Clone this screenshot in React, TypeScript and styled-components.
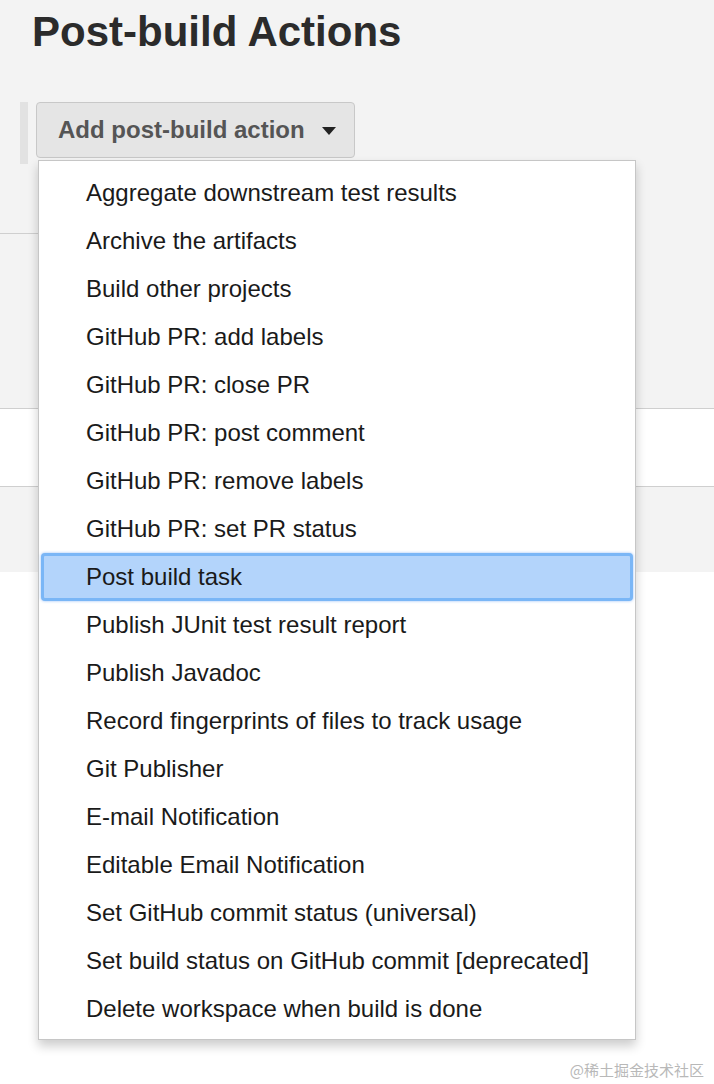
import styled, { createGlobalStyle } from 'styled-components'

const GlobalStyle = createGlobalStyle`
  html, body {
    margin: 0;
    padding: 0;
    background: #ffffff;
  }
  body {
    font-family: 'Liberation Sans', Arial, Helvetica, sans-serif;
    color: #222;
  }
`

const actions = [
  'Aggregate downstream test results',
  'Archive the artifacts',
  'Build other projects',
  'GitHub PR: add labels',
  'GitHub PR: close PR',
  'GitHub PR: post comment',
  'GitHub PR: remove labels',
  'GitHub PR: set PR status',
  'Post build task',
  'Publish JUnit test result report',
  'Publish Javadoc',
  'Record fingerprints of files to track usage',
  'Git Publisher',
  'E-mail Notification',
  'Editable Email Notification',
  'Set GitHub commit status (universal)',
  'Set build status on GitHub commit [deprecated]',
  'Delete workspace when build is done',
]

const selected = 'Post build task'

export default function App() {
  return (
    <Page>
      <GlobalStyle />
      <Header>
        <Title>Post-build Actions</Title>
        <ButtonRow>
          <SideBar />
          <DropWrap>
            <AddButton>
              Add post-build action
              <Caret viewBox="0 0 14 8">
                <path d="M0 0 L14 0 L7 8 Z" fill="#222" />
              </Caret>
            </AddButton>
            <Menu>
              {actions.map((a) => (
                <MenuItem key={a} $active={a === selected}>
                  {a}
                </MenuItem>
              ))}
            </Menu>
          </DropWrap>
        </ButtonRow>
        <StubLine />
      </Header>
      <Band $height={174} $gray />
      <Band $height={77} />
      <Band $height={85} $gray $last />
      <Watermark>@稀土掘金技术社区</Watermark>
    </Page>
  )
}

const Page = styled.div`
  position: relative;
  height: 1084px;
  overflow: hidden;
  background: #ffffff;
`

const Header = styled.section`
  background: #f3f3f3;
  height: 234px;
  display: flex;
  flex-direction: column;
  position: relative;
`

const Title = styled.h1`
  margin: 0;
  padding: 8px 0 0 32px;
  font-size: 42px;
  line-height: 48px;
  font-weight: 700;
  color: #2b2b2b;
`

const ButtonRow = styled.div`
  display: flex;
  gap: 8px;
  margin-top: 46px;
  padding-left: 20px;
`

const SideBar = styled.div`
  width: 8px;
  height: 62px;
  background: #e2e2e2;
`

const DropWrap = styled.div`
  position: relative;
  z-index: 2;
`

const AddButton = styled.button`
  display: flex;
  align-items: center;
  gap: 17px;
  height: 56px;
  width: 319px;
  padding: 0 0 0 21px;
  box-sizing: border-box;
  background: #e5e5e5;
  border: 1px solid #c8c8c8;
  border-radius: 4px;
  font-family: 'Liberation Sans', Arial, sans-serif;
  font-size: 24px;
  font-weight: 700;
  color: #555;
  cursor: pointer;
`

const Caret = styled.svg`
  width: 14px;
  height: 8px;
  margin-top: 2px;
`

const Menu = styled.ul`
  position: absolute;
  top: 58px;
  left: 2px;
  width: 598px;
  box-sizing: border-box;
  margin: 0;
  padding: 8px 2px 6px;
  list-style: none;
  background: #ffffff;
  border: 1px solid #c6c6c6;
  box-shadow: 0 6px 10px rgba(0, 0, 0, 0.2);
`

const MenuItem = styled.li<{ $active?: boolean }>`
  height: 48px;
  display: flex;
  align-items: center;
  padding-left: 45px;
  box-sizing: border-box;
  font-size: 24px;
  color: #1a1a1a;
  border-radius: 4px;
  white-space: nowrap;
  ${(p) =>
    p.$active &&
    `
    background: #b3d4fb;
    border: 3px solid #7ab6f6;
    padding-left: 42px;
    box-shadow: 0 0 3px rgba(80, 150, 240, 0.6);
  `}
`

const StubLine = styled.div`
  position: absolute;
  left: 0;
  bottom: 0;
  width: 40px;
  border-bottom: 1px solid #cfcfcf;
`

const Band = styled.div<{ $height: number; $gray?: boolean; $last?: boolean }>`
  height: ${(p) => p.$height}px;
  background: ${(p) => (p.$gray ? '#f3f3f3' : '#ffffff')};
  border-bottom: ${(p) => (p.$last ? 'none' : '1px solid #cfcfcf')};
`

const Watermark = styled.div`
  position: absolute;
  right: 10px;
  bottom: 4px;
  font-family: 'Noto Sans CJK SC', sans-serif;
  font-size: 15px;
  color: #b8b8b8;
`
